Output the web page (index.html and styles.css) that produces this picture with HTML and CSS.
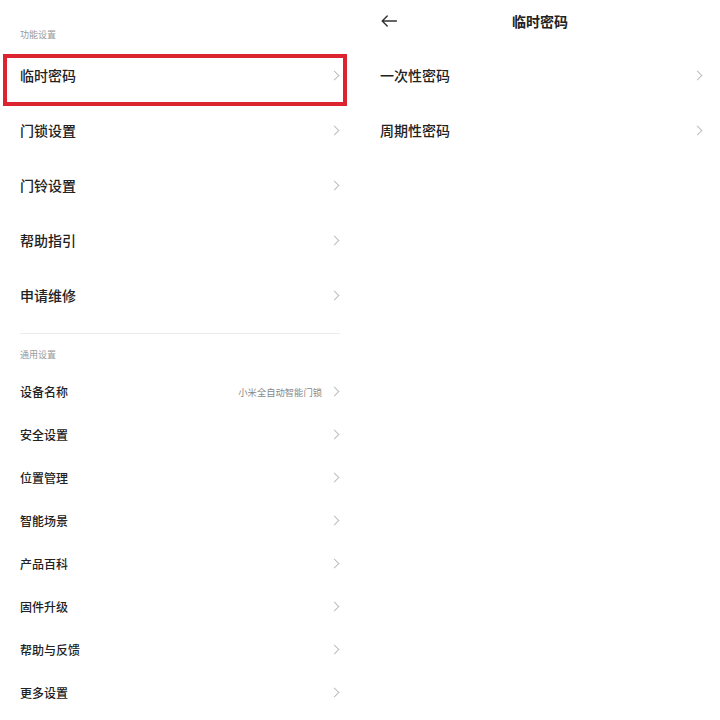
FILE: index.html
```html
<!DOCTYPE html>
<html lang="zh-CN">
<head>
  <meta charset="UTF-8" />
  <title>门锁设置</title>
  <link rel="stylesheet" href="styles.css">
</head>
<body>

  <div class="page">

    <!-- Left: settings list -->
    <div class="panel">
      <div class="section-title first">功能设置</div>
      <div class="row big marked"><span class="label">临时密码</span><span class="chev"></span></div>
      <div class="row big"><span class="label">门锁设置</span><span class="chev"></span></div>
      <div class="row big"><span class="label">门铃设置</span><span class="chev"></span></div>
      <div class="row big"><span class="label">帮助指引</span><span class="chev"></span></div>
      <div class="row big"><span class="label">申请维修</span><span class="chev"></span></div>

      <div class="divider"></div>

      <div class="section-title">通用设置</div>
      <div class="row small"><span class="label">设备名称</span><span class="value">小米全自动智能门锁</span><span class="chev"></span></div>
      <div class="row small"><span class="label">安全设置</span><span class="chev"></span></div>
      <div class="row small"><span class="label">位置管理</span><span class="chev"></span></div>
      <div class="row small"><span class="label">智能场景</span><span class="chev"></span></div>
      <div class="row small"><span class="label">产品百科</span><span class="chev"></span></div>
      <div class="row small"><span class="label">固件升级</span><span class="chev"></span></div>
      <div class="row small"><span class="label">帮助与反馈</span><span class="chev"></span></div>
      <div class="row small"><span class="label">更多设置</span><span class="chev"></span></div>
    </div>

    <!-- Right: temp password -->
    <div class="panel">
      <div class="topbar">
        <svg class="back" width="16" height="12" viewBox="0 0 16 12">
          <path d="M15.5 6 H1.2 M6.2 1 L1.2 6 L6.2 11" fill="none" stroke="#333" stroke-width="1.4" stroke-linecap="round" stroke-linejoin="round"/>
        </svg>
        <div class="title">临时密码</div>
      </div>
      <div class="sub-list">
        <div class="row big tight"><span class="label">一次性密码</span><span class="chev"></span></div>
        <div class="row big tight"><span class="label">周期性密码</span><span class="chev"></span></div>
      </div>
    </div>

  </div>

</body>
</html>
```

FILE: styles.css
```css
body {
  margin: 0;
  background: white;
  color: #222;
  font-family: "Noto Sans CJK SC", "Noto Sans", sans-serif;
}

.page {
  display: flex;
  width: 720px;
  height: 720px;
  overflow: hidden;
}

.panel {
  width: 360px;
  flex: none;
}

.section-title {
  font-size: 9px;
  line-height: 18px;
  color: #999;
  padding: 12px 20px 6px;
}

.section-title.first {
  padding: 26px 20px 3.5px;
}

.row {
  position: relative;
  display: flex;
  align-items: center;
  padding: 0 20px;
}

.row.big {
  height: 55px;
  font-size: 14px;
}

.row.small {
  height: 43px;
  font-size: 12px;
}

.row.tight {
  padding-right: 17px;
}

.label {
  flex: 1;
  font-weight: 500;
  color: #222;
}

.value {
  font-size: 9.3px;
  color: #888;
  margin-right: 9px;
}

.chev {
  width: 6px;
  height: 6px;
  border-top: 1.1px solid #bdbdbd;
  border-right: 1.1px solid #bdbdbd;
  transform: rotate(45deg);
  margin-right: 2px;
}

/* red annotation box */
.row.marked::after {
  content: "";
  position: absolute;
  left: 3px;
  right: 13px;
  top: 6.5px;
  bottom: -3.5px;
  border: 4.5px solid #dc2430;
}

.divider {
  height: 1px;
  background: #ececec;
  margin: 10.5px 20px 0;
}

.topbar {
  position: relative;
  height: 42px;
  display: flex;
  align-items: center;
  justify-content: center;
}

.back {
  position: absolute;
  left: 21px;
  top: 15px;
}

.title {
  font-size: 14px;
  font-weight: 700;
  color: #222;
}

.sub-list {
  padding-top: 5.5px;
}
```
